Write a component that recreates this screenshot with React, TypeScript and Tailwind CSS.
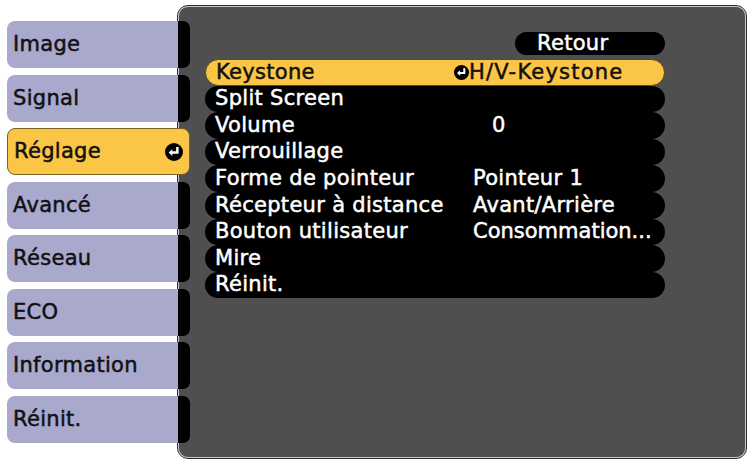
import React from "react";

const tabs = ["Image", "Signal", "Réglage", "Avancé", "Réseau", "ECO", "Information", "Réinit."];

const rows: { label: string; value?: string; enter?: boolean }[] = [
  { label: "Keystone", value: "H/V-Keystone", enter: true },
  { label: "Split Screen" },
  { label: "Volume", value: "0" },
  { label: "Verrouillage" },
  { label: "Forme de pointeur", value: "Pointeur 1" },
  { label: "Récepteur à distance", value: "Avant/Arrière" },
  { label: "Bouton utilisateur", value: "Consommation..." },
  { label: "Mire" },
  { label: "Réinit." },
];

function EnterIcon({ className }: { className?: string }) {
  return (
    <svg viewBox="0 0 16 16" className={className}>
      <circle cx="8" cy="8" r="8" fill="#000" />
      <path d="M11 3.5v5H5.5" fill="none" stroke="#fff" strokeWidth="2.2" />
      <path d="M3.2 8.5l3.3-3v6z" fill="#fff" />
    </svg>
  );
}

// projector OSD type: plain DejaVu, thickened a touch
const font = { fontFamily: "'DejaVu Sans', sans-serif", WebkitTextStroke: "0.5px currentColor" };

export default function App() {
  return (
    <div className="w-[751px] h-[462px] bg-white flex tracking-[0.3px]" style={font}>
      {/* left tabs */}
      <div className="relative z-10 ml-[7px] mt-[21px] w-[183px] mr-[-12px] flex flex-col gap-[6.5px]">
        {tabs.map((t, i) =>
          i === 2 ? (
            <div
              key={t}
              className="h-[47px] flex items-center justify-between pl-[6px] pr-[6px] pt-[1px] bg-[#fbc546] rounded-[8px] border border-[#7a6224] text-[21px] text-[#111]"
            >
              <span>{t}</span>
              <EnterIcon className="w-[18px] h-[18px]" />
            </div>
          ) : (
            <div key={t} className="h-[47px] flex">
              <div className="w-[171px] flex items-center pl-[6px] pt-[1px] bg-[#a9a8cd] rounded-l-[8px] text-[21px] text-[#111]">
                {t}
              </div>
              <div className="w-[12px] bg-black rounded-r-[7px]" />
            </div>
          )
        )}
      </div>

      {/* main panel */}
      <div className="mt-[6px] w-[568px] h-[452px] rounded-[10px] border border-[#c9c9c9] outline outline-1 outline-[#2a2a2a] bg-[#4f4f4f] pl-[26px] pt-[25px]">
        <div className="w-[460px] flex justify-end">
          <div className="w-[150px] h-[23px] rounded-full bg-black text-white text-[21px] leading-[23px] pl-[22px]">
            Retour
          </div>
        </div>
        <div className="mt-[4px] w-[460px] flex flex-col">
          {rows.map((r, i) => (
            <div
              key={r.label}
              className={
                i === 0
                  ? "h-[26.6px] flex items-center rounded-full bg-[#fbc546] border border-[#5a4a20] text-[#111] text-[21px]"
                  : "h-[26.6px] flex items-center rounded-full bg-black text-white text-[21px]"
              }
            >
              <span className="pl-[10px] w-[248px] shrink-0 whitespace-nowrap">{r.label}</span>
              {r.enter ? (
                <span className="flex items-center whitespace-nowrap tracking-[1.2px]">
                  <EnterIcon className="w-[15px] h-[15px] mr-[0px]" />
                  {r.value}
                </span>
              ) : r.value === "0" ? (
                <span className="pl-[39px]">{r.value}</span>
              ) : r.value === "Consommation..." ? (
                <span className="pl-[20px] whitespace-nowrap tracking-[0px]">{r.value}</span>
              ) : (
                <span className="pl-[20px] whitespace-nowrap">{r.value}</span>
              )}
            </div>
          ))}
        </div>
      </div>
    </div>
  );
}
